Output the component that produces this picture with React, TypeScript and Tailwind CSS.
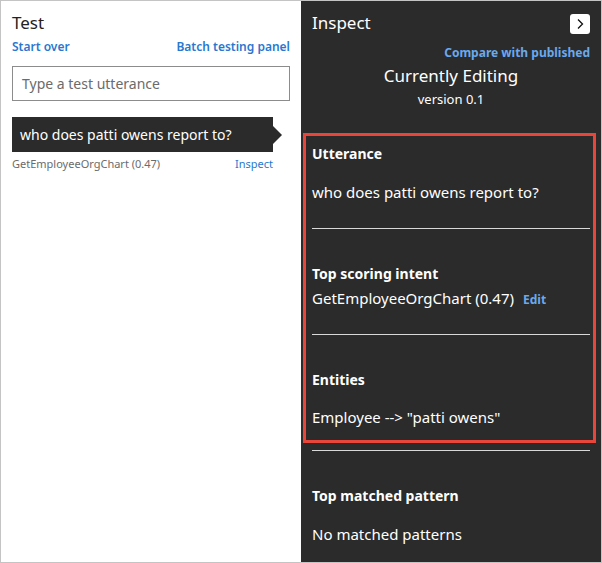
const font = { fontFamily: '"Noto Sans", "Open Sans", sans-serif' };

function Divider() {
  return <div className="h-px bg-[#d9d9d9]" />;
}

function Section({ title, children }: { title: string; children: React.ReactNode }) {
  return (
    <div>
      <div className="text-[14px] font-bold leading-[20px] text-white">{title}</div>
      {children}
    </div>
  );
}

export default function App() {
  return (
    <div className="flex h-[563px] w-[602px] border border-[#c4c4c4] bg-white" style={font}>
      {/* test panel */}
      <div className="flex w-[300px] flex-col bg-white px-[11px]">
        <div className="mt-[10px] text-[17px] leading-[24px] text-[#222]">Test</div>
        <div className="mt-[4px] flex justify-between text-[12px] font-semibold leading-[16px] text-[#2a77d0]">
          <span>Start over</span>
          <span>Batch testing panel</span>
        </div>
        <div className="mt-[11px] flex h-[35px] items-center border border-[#8c8c8c] px-[9px] text-[14px] text-[#6b6b6b]">
          Type a test utterance
        </div>
        <div className="mt-[16px] flex items-center">
          <div className="flex h-[35px] w-[261px] items-center bg-[#2b2b2b] px-[8px] text-[14px] text-white">
            who does patti owens report to?
          </div>
          <div className="h-0 w-0 border-y-[9px] border-l-[9px] border-y-transparent border-l-[#2b2b2b]" />
        </div>
        <div className="mt-[4px] flex w-[261px] justify-between text-[11px] leading-[16px]">
          <span className="text-[#6b6b6b]">GetEmployeeOrgChart (0.47)</span>
          <span className="text-[#2a77d0]">Inspect</span>
        </div>
      </div>

      {/* inspect panel */}
      <div className="flex flex-1 flex-col bg-[#2b2b2b] px-[11px] text-white">
        <div className="mt-[10px] flex items-start justify-between">
          <span className="text-[17px] leading-[24px]">Inspect</span>
          <span className="mt-[3px] flex h-[20px] w-[20px] items-center justify-center rounded-[3px] bg-white">
            <svg width="12" height="12" viewBox="0 0 12 12" fill="none" stroke="#111" strokeWidth="1.3">
              <path d="M4 1.5 8.5 6 4 10.5" />
            </svg>
          </span>
        </div>
        <div className="mt-[10px] text-right text-[12px] font-bold leading-[16px] text-[#6aa9ec]">
          Compare with published
        </div>
        <div className="mt-[3px] text-center text-[17px] leading-[24px]">Currently Editing</div>
        <div className="mt-[2px] text-center text-[13px] leading-[18px]">version 0.1</div>

        <div className="mt-[25px] -ml-[9px] -mr-[6px] border-[3px] border-[#e8463b] pb-[13px] pl-[6px] pr-[3px] pt-[8px]">
          <Section title="Utterance">
            <div className="mt-[18px] text-[15px] leading-[20px]">who does patti owens report to?</div>
          </Section>
          <div className="mt-[26px]">
            <Divider />
          </div>
          <div className="mt-[35px]">
            <Section title="Top scoring intent">
              <div className="mt-[4px] flex h-[20px] items-baseline text-[15px] leading-[20px]">
                GetEmployeeOrgChart (0.47)
                <span className="ml-[9px] text-[12px] font-bold leading-[16px] text-[#6aa9ec]">Edit</span>
              </div>
            </Section>
          </div>
          <div className="mt-[26px]">
            <Divider />
          </div>
          <div className="mt-[35px]">
            <Section title="Entities">
              <div className="mt-[17px] text-[15px] leading-[20px]">Employee --&gt; "patti owens"</div>
            </Section>
          </div>
        </div>
        <div className="mt-[7px]">
          <Divider />
        </div>
        <div className="mt-[35px]">
          <Section title="Top matched pattern">
            <div className="mt-[18px] text-[15px] leading-[20px]">No matched patterns</div>
          </Section>
        </div>
      </div>
    </div>
  );
}
